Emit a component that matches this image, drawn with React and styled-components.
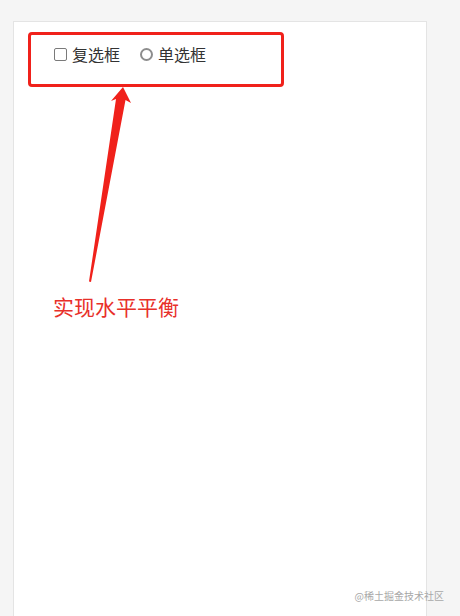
import React from 'react'
import styled, { createGlobalStyle } from 'styled-components'

const GlobalStyle = createGlobalStyle`
    html, body {
        margin: 0;
        padding: 0;
        background: #f5f5f5;
        font-family: "Noto Sans CJK SC", "Noto Sans", sans-serif;
    }
`

const Page = styled.div`
    position: relative;
    height: 100vh;
    overflow: hidden;
    padding: 21px 0 0 13px;
    box-sizing: border-box;
`

const Card = styled.div`
    width: 414px;
    height: 700px;
    box-sizing: border-box;
    background: #fff;
    border: 1px solid #e4e4e4;
    padding: 10px 14px;
`

const Highlight = styled.div`
    width: 256px;
    height: 55px;
    box-sizing: border-box;
    border: 3px solid #f0211b;
    border-radius: 4px;
    display: flex;
    align-items: flex-start;
    gap: 20px;
    padding: 7px 0 0 23px;
`

const Option = styled.label`
    display: flex;
    align-items: center;
    gap: 5px;
    font-size: 16px;
    line-height: 24px;
    color: #333;
`

const Box = styled.span`
    width: 13px;
    height: 13px;
    box-sizing: border-box;
    border: ${p => (p.round ? '2px solid #8d8d8d' : '1.5px solid #7a7a7a')};
    border-radius: ${p => (p.round ? '50%' : '2px')};
    background: #fff;
`

const Arrow = styled.svg`
    display: block;
    margin: -2px 0 0 57px;
`

const Note = styled.div`
    margin: 7px 0 0 25px;
    font-size: 21px;
    line-height: 28px;
    color: #e8302a;
`

const Watermark = styled.div`
    position: absolute;
    right: 16px;
    bottom: 13px;
    font-size: 10px;
    color: #a8a8a8;
`

export default function App() {
    return (
        <Page>
            <GlobalStyle />
            <Card>
                <Highlight>
                    <Option><Box />复选框</Option>
                    <Option><Box round />单选框</Option>
                </Highlight>
                <Arrow width="50" height="200" viewBox="85 85 50 200">
                    <polygon
                        points="123,87 131,103 125.5,100 91,282 89,281.5 116,99 111,101"
                        fill="#f0211b"
                    />
                </Arrow>
                <Note>实现水平平衡</Note>
            </Card>
            <Watermark>@稀土掘金技术社区</Watermark>
        </Page>
    )
}
